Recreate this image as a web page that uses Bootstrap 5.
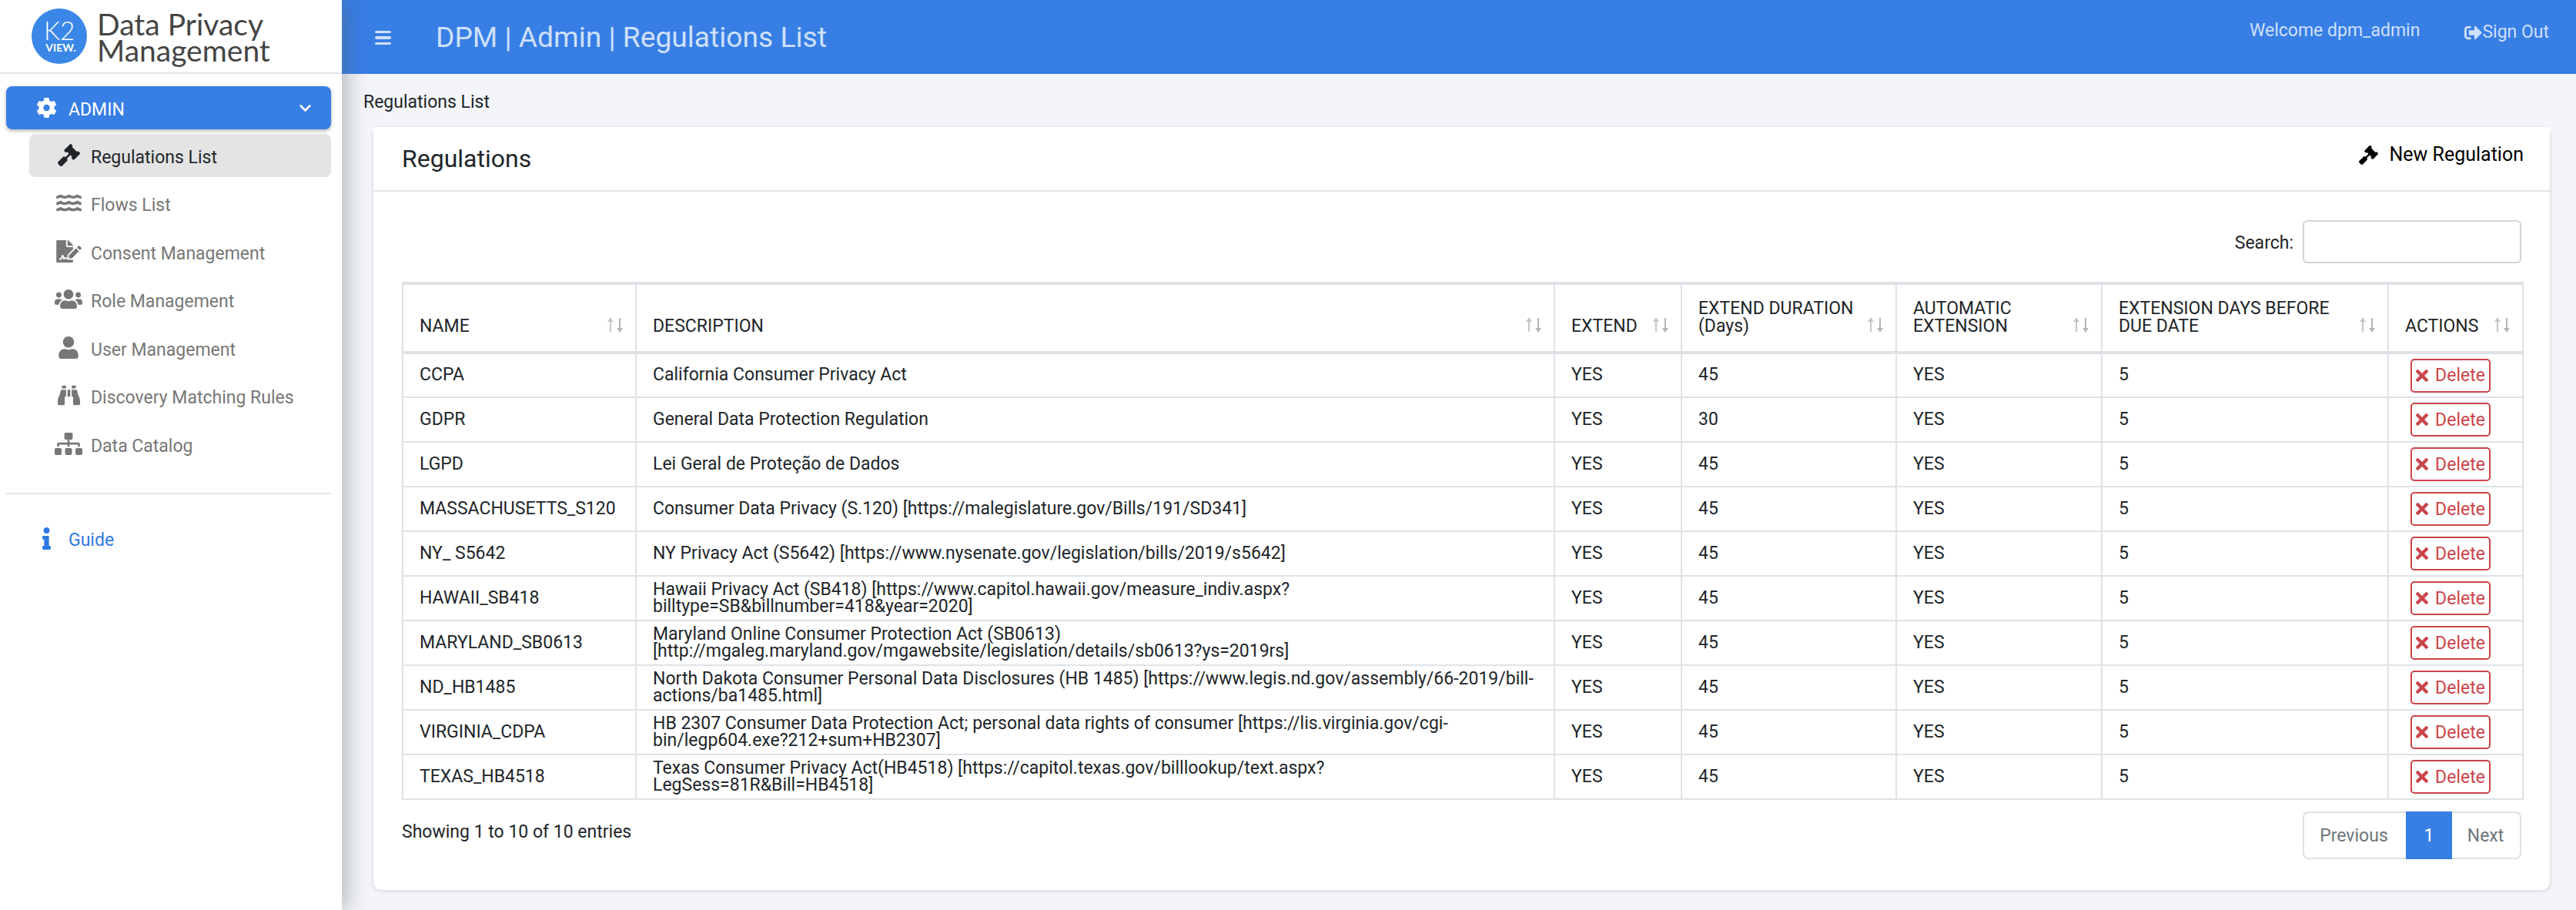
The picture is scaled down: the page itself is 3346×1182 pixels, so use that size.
<!DOCTYPE html>
<html lang="en"><head><meta charset="utf-8"><title>Regulations List</title>
<link href="https://cdn.jsdelivr.net/npm/bootstrap@5.3.0/dist/css/bootstrap.min.css" rel="stylesheet">
<style>
html,body{height:100%}
body{font-family:Roboto,"Liberation Sans",sans-serif;font-size:23px;line-height:22.4px;background:#f3f5f9;color:#212529;overflow:hidden}
.app-shell{height:1182px}
.side{width:444px;flex:none;background:#fff;box-shadow:6px 0 26px rgba(90,95,105,.42);z-index:2;height:100%}
.brand{height:96px;border-bottom:2px solid #e2e6ea;padding-left:41px;gap:13px}
.brand-text{font-family:Lato,"Liberation Sans",sans-serif;font-size:39px;line-height:34px;color:#454545;padding-top:1px}
.logo-mark{width:72px;height:72px;flex:none}
.logo-mark text{font-family:Lato,sans-serif;fill:#fff}
.menu-wrap{padding:16px 14px 0 8px}
.admin-btn{height:56px;background:#377ee5;color:#fff;border-radius:8px;padding:0 26px 0 39px;box-shadow:0 2px 5px rgba(0,0,0,.3);font-size:23px}
.admin-btn .lbl{margin-left:15px;padding-top:7px}
.sub-item{height:56px;margin-left:30px;margin-bottom:6.5px;border-radius:8px;color:#777;text-decoration:none;padding-top:6px}
.sub-item.on{background:#e4e4e4;color:#212529;margin-top:6px}
.ico-slot{width:80px;flex:none;display:flex;justify-content:center;padding-left:22px;margin-top:-8px}
.sub-item svg{fill:currentColor}
.on svg{fill:#212529}
.side-sep{border-top:2px solid #e4e4e4;margin:35px 0 0;opacity:1}
.guide{color:#2f79e4;text-decoration:none;margin:47px 0 0;height:26px;padding-left:47px}
.guide svg{fill:#2f79e4;margin-top:-6px}
.guide span{margin-left:23px}
.main-col{min-width:0}
.topbar{height:96px;background:#377ee5;color:#cfe0fb;padding:0 35px 0 43px}
.burger{width:21px;flex:none;display:flex;flex-direction:column;gap:4px;margin-top:2px}
.burger i{display:block;height:3.5px;background:#cfe0fb;border-radius:2px}
.page-title{font-size:37.2px;font-weight:400;margin:0 0 0 58px;line-height:44px}
.welcome{font-size:23px;margin-right:58px;margin-bottom:16px}
.signout{font-size:23px;margin-bottom:12px}
.signout svg{fill:#cfe0fb}
.crumb{padding:0 34px 0 28px;height:69px;padding-top:26px}
.panel{margin:0 34px 0 41px;border-radius:10px;border:0;height:991px;box-shadow:0 1px 5px rgba(60,70,90,.22)}
.panel-head{height:84px;border-bottom:2px solid #e4e6e9;padding:0 34px 0 37px;background:#fff}
.panel-title{font-size:32px;font-weight:400;margin:0;line-height:36px;color:#212529}
.new-reg{font-size:25px;color:#000;text-decoration:none;margin-top:-10px;gap:14px}
.panel-body{padding:37px 37px 0 37px}
.search-row{height:80px;align-items:flex-start}
.search-box{width:284px;height:56px;border:2px solid #ced4da;border-radius:6px;margin-left:12px;padding:0 12px}
.search-lbl{margin-top:19px}
.grid-table{table-layout:fixed;width:100%;border-collapse:collapse;margin:0}
.grid-table th,.grid-table td{border:2px solid #dee2e6;padding:0 21px;vertical-align:middle;font-weight:400}
.grid-table th{border-top-width:4px;border-bottom-width:4px;vertical-align:bottom;padding-bottom:21px;height:90px;color:#212529}
.grid-table td{height:58px}
.grid-table td:last-child{padding-left:28px;padding-right:0}
.th-in{display:flex;justify-content:space-between;align-items:flex-end}
.th-in svg{flex:none;margin:0 -6px 3px 6px}
.c1{width:303px}.c2{width:1193px}.c3{width:165px}.c4{width:279px}.c5{width:267px}.c6{width:372px}.c7{width:175px}
.del-btn{width:104px;height:44px;font-size:23px;border-width:2px;color:#cb444a;border-color:#cb444a;border-radius:5px;display:inline-flex;align-items:center;justify-content:center;gap:9px;line-height:1;padding:0}
.del-btn svg{fill:#cb444a}
.foot-row{margin-top:15px}
.foot-info{margin-top:15px;line-height:24px}
.pager .page-link{font-size:23px;padding:0;height:62px;line-height:60px;color:#6c757d;border:2px solid #dee2e6;text-align:center}
.pager .pg-prev .page-link{width:135px;border-right:0;border-radius:8px 0 0 8px;padding-right:4px}
.pager .active .page-link{width:60px;background:#377ee5;border-color:#377ee5;color:#fff}
.pager .pg-next .page-link{width:91px;border-left:0;border-radius:0 8px 8px 0}
.pager{margin:0}
</style></head><body>
<div class="app-shell d-flex">
<aside class="side d-flex flex-column">
 <div class="brand d-flex align-items-center">
  <svg class="logo-mark" viewBox="0 0 72 72" role="img" aria-label="K2 View"><circle cx="36" cy="36" r="36" fill="#3a87e8"/><text text-anchor="middle"><tspan x="36" y="41" font-size="33" font-weight="300">K2</tspan><tspan x="38" y="56" font-size="14" font-weight="700">VIEW.</tspan></text></svg>
  <div class="brand-text">Data Privacy<br>Management</div>
 </div>
 <div class="menu-wrap">
  <div class="admin-btn d-flex align-items-center">
   <svg width="27" height="28" viewBox="0 0 512 512" fill="#fff"><path d="M487.4 315.7l-42.6-24.6c4.3-23.2 4.3-47 0-70.2l42.6-24.6c4.9-2.8 7.1-8.6 5.5-14-11.1-35.6-30-67.8-54.7-94.6-3.8-4.1-10-5.1-14.8-2.3L380.8 110c-17.9-15.4-38.5-27.3-60.8-35.1V25.8c0-5.6-3.9-10.5-9.4-11.7-36.7-8.2-74.3-7.8-109.2 0-5.5 1.2-9.4 6.1-9.4 11.7V75c-22.2 7.9-42.8 19.8-60.8 35.1L88.7 85.5c-4.9-2.8-11-1.9-14.8 2.3-24.7 26.7-43.6 58.9-54.7 94.6-1.7 5.4.6 11.2 5.5 14L67.3 221c-4.3 23.2-4.3 47 0 70.2l-42.6 24.6c-4.9 2.8-7.1 8.6-5.5 14 11.1 35.6 30 67.8 54.7 94.6 3.8 4.1 10 5.1 14.8 2.3l42.6-24.6c17.9 15.4 38.5 27.3 60.8 35.1v49.2c0 5.6 3.9 10.5 9.4 11.7 36.7 8.2 74.3 7.8 109.2 0 5.5-1.2 9.4-6.1 9.4-11.7v-49.2c22.2-7.9 42.8-19.8 60.8-35.1l42.6 24.6c4.9 2.8 11 1.9 14.8-2.3 24.7-26.7 43.6-58.9 54.7-94.6 1.5-5.5-.7-11.3-5.6-14.1zM256 336c-44.1 0-80-35.9-80-80s35.9-80 80-80 80 35.9 80 80-35.9 80-80 80z"/></svg>
   <span class="lbl flex-grow-1">ADMIN</span>
   <svg width="15" height="17" viewBox="0 0 448 512" fill="#fff"><path d="M207.029 381.476L12.686 187.132c-9.373-9.373-9.373-24.569 0-33.941l22.667-22.667c9.357-9.357 24.522-9.375 33.901-.04L224 284.505l154.745-154.021c9.379-9.335 24.544-9.317 33.901.04l22.667 22.667c9.373 9.373 9.373 24.569 0 33.941L240.971 381.476c-9.373 9.372-24.569 9.372-33.942 0z"/></svg>
  </div>
  <a class="sub-item on d-flex align-items-center" href="#"><span class="ico-slot"><svg width="29" height="29" viewBox="0 0 512 512"><path d="M504.971 199.362l-22.627-22.627c-9.373-9.373-24.569-9.373-33.941 0l-5.657 5.657L329.608 69.255l5.657-5.657c9.373-9.373 9.373-24.569 0-33.941L312.638 7.029c-9.373-9.373-24.569-9.373-33.941 0L154.246 131.48c-9.373 9.373-9.373 24.569 0 33.941l22.627 22.627c9.373 9.373 24.569 9.373 33.941 0l5.657-5.657 39.598 39.598-81.04 81.04-5.657-5.657c-12.497-12.497-32.758-12.497-45.255 0L9.373 412.118c-12.497 12.497-12.497 32.758 0 45.255l45.255 45.255c12.497 12.497 32.758 12.497 45.255 0l114.745-114.745c12.497-12.497 12.497-32.758 0-45.255l-5.657-5.657 81.04-81.04 39.598 39.598-5.657 5.657c-9.373 9.373-9.373 24.569 0 33.941l22.627 22.627c9.373 9.373 24.569 9.373 33.941 0l124.451-124.451c9.372-9.372 9.372-24.568 0-33.941z"/></svg></span>Regulations List</a>
  <a class="sub-item d-flex align-items-center" href="#"><span class="ico-slot"><svg width="33" height="29" viewBox="0 0 576 512"><path d="M562.1 383.9c-21.5-2.4-42.1-10.5-57.9-22.9-14.1-11.1-34.2-11.3-48.2 0-37.9 30.4-107.2 30.4-145.7-1.5-13.5-11.2-33-9.1-46.7 1.8-38 30.1-106.9 30-145.2-1.7-13.5-11.2-33.3-8.9-47.1 2-15.5 12.2-36 20.1-57.7 22.4-7.9.8-13.6 7.8-13.6 15.7v32.2c0 9.1 7.6 16.8 16.7 16 28.8-2.5 56.1-11.4 79.4-25.9 56.5 34.6 137 34.1 192 0 56.5 34.6 137 34.1 192 0 23.3 14.2 50.9 23.3 79.1 25.8 9.1.8 16.7-6.9 16.7-16v-31.6c.1-8-5.7-15.4-13.8-16.3zm0-144c-21.5-2.4-42.1-10.5-57.9-22.9-14.1-11.1-34.2-11.3-48.2 0-37.9 30.4-107.2 30.4-145.7-1.5-13.5-11.2-33-9.1-46.7 1.8-38 30.1-106.9 30-145.2-1.7-13.5-11.2-33.3-8.9-47.1 2-15.5 12.2-36 20.1-57.7 22.4-7.9.8-13.6 7.8-13.6 15.7v32.2c0 9.1 7.6 16.8 16.7 16 28.8-2.5 56.1-11.4 79.4-25.9 56.5 34.6 137 34.1 192 0 56.5 34.6 137 34.1 192 0 23.3 14.2 50.9 23.3 79.1 25.8 9.1.8 16.7-6.9 16.7-16v-31.6c.1-8-5.7-15.4-13.8-16.3zm0-144C540.6 93.4 520 85.4 504.2 73 490.1 61.9 470 61.7 456 73c-37.9 30.4-107.2 30.4-145.7-1.5-13.5-11.2-33-9.1-46.7 1.8-38 30.1-106.9 30-145.2-1.7-13.5-11.2-33.3-8.9-47.1 2-15.5 12.2-36 20.1-57.7 22.4-7.9.8-13.6 7.8-13.6 15.7v32.2c0 9.1 7.6 16.8 16.7 16 28.8-2.5 56.1-11.4 79.4-25.9 56.5 34.6 137 34.1 192 0 56.5 34.6 137 34.1 192 0 23.3 14.2 50.9 23.3 79.1 25.8 9.1.8 16.7-6.9 16.7-16v-31.6c.1-8-5.7-15.4-13.8-16.3z"/></svg></span>Flows List</a>
  <a class="sub-item d-flex align-items-center" href="#"><span class="ico-slot"><svg width="33" height="29" viewBox="0 0 576 512"><path d="M218.17 424.14c-2.95-5.92-8.09-6.52-10.17-6.52s-7.22.59-10.02 6.19l-7.67 15.34c-6.37 12.78-25.03 11.37-29.48-2.09L144 386.59l-10.61 31.88c-5.89 17.66-22.38 29.53-41 29.53H80c-8.84 0-16-7.16-16-16s7.16-16 16-16h12.39c4.83 0 9.11-3.08 10.64-7.66l18.19-54.64c3.3-9.81 12.44-16.41 22.78-16.41s19.48 6.59 22.77 16.41l13.88 41.64c19.75-16.19 54.06-9.7 66 14.16 1.89 3.78 5.49 5.95 9.36 6.26v-82.12l128-127.09V160H248c-13.2 0-24-10.8-24-24V0H24C10.7 0 0 10.7 0 24v464c0 13.3 10.7 24 24 24h336c13.3 0 24-10.7 24-24v-40l-128-.11c-16.12-.31-30.58-9.28-37.83-23.75zM384 121.9c0-6.3-2.5-12.4-7-16.9L279.1 7c-4.5-4.5-10.6-7-17-7H256v128h128v-6.1zm-96 225.06V416h68.99l161.68-162.78-67.88-67.88L288 346.96zm280.54-179.63l-31.87-31.87c-9.94-9.94-26.07-9.94-36.01 0l-27.25 27.25 67.88 67.88 27.25-27.25c9.95-9.94 9.95-26.07 0-36.01z"/></svg></span>Consent Management</a>
  <a class="sub-item d-flex align-items-center" href="#"><span class="ico-slot"><svg width="36" height="29" viewBox="0 0 640 512"><path d="M96 224c35.3 0 64-28.7 64-64s-28.7-64-64-64-64 28.7-64 64 28.7 64 64 64zm448 0c35.3 0 64-28.7 64-64s-28.7-64-64-64-64 28.7-64 64 28.7 64 64 64zm32 32h-64c-17.6 0-33.5 7.1-45.1 18.6 40.3 22.1 68.9 62 75.1 109.4h66c17.7 0 32-14.3 32-32v-32c0-35.3-28.7-64-64-64zm-256 0c61.9 0 112-50.1 112-112S381.9 32 320 32 208 82.1 208 144s50.1 112 112 112zm76.8 32h-8.3c-20.8 10-43.9 16-68.5 16s-47.6-6-68.5-16h-8.3C179.6 288 128 339.6 128 403.2V432c0 26.5 21.5 48 48 48h288c26.5 0 48-21.5 48-48v-28.8c0-63.6-51.6-115.2-115.2-115.2zm-223.7-13.4C161.5 263.1 145.6 256 128 256H64c-35.3 0-64 28.7-64 64v32c0 17.7 14.3 32 32 32h65.9c6.3-47.4 34.9-87.3 75.2-109.4z"/></svg></span>Role Management</a>
  <a class="sub-item d-flex align-items-center" href="#"><span class="ico-slot"><svg width="26" height="29" viewBox="0 0 448 512"><path d="M224 256c70.7 0 128-57.3 128-128S294.7 0 224 0 96 57.3 96 128s57.3 128 128 128zm89.6 32h-16.7c-22.2 10.2-46.9 16-72.9 16s-50.6-5.8-72.9-16h-16.7C60.2 288 0 348.2 0 422.4V464c0 26.5 21.5 48 48 48h352c26.5 0 48-21.5 48-48v-41.6c0-74.2-60.2-134.4-134.4-134.4z"/></svg></span>User Management</a>
  <a class="sub-item d-flex align-items-center" href="#"><span class="ico-slot"><svg width="29" height="29" viewBox="0 0 512 512"><path d="M416 48c0-8.84-7.16-16-16-16h-64c-8.84 0-16 7.16-16 16v48h96V48zM63.91 159.99C61.4 253.84 3.46 274.22 0 404v44c0 17.67 14.33 32 32 32h96c17.67 0 32-14.33 32-32V288h32V128H95.84c-17.63 0-31.45 14.37-31.93 31.99zm384.18 0c-.48-17.62-14.3-31.99-31.93-31.99H320v160h32v160c0 17.67 14.33 32 32 32h96c17.67 0 32-14.33 32-32v-44c-3.46-129.78-61.4-150.16-63.91-244.01zM176 32h-64c-8.84 0-16 7.16-16 16v48h96V48c0-8.84-7.16-16-16-16zm48 256h64V128h-64v160z"/></svg></span>Discovery Matching Rules</a>
  <a class="sub-item d-flex align-items-center" href="#"><span class="ico-slot"><svg width="36" height="29" viewBox="0 0 640 512"><path d="M128 352H32c-17.67 0-32 14.33-32 32v96c0 17.67 14.33 32 32 32h96c17.67 0 32-14.33 32-32v-96c0-17.67-14.33-32-32-32zm-24-80h192v48h48v-48h192v48h48v-57.59c0-21.17-17.23-38.41-38.41-38.41H344v-64h40c17.67 0 32-14.33 32-32V32c0-17.67-14.33-32-32-32H256c-17.67 0-32 14.33-32 32v96c0 17.67 14.33 32 32 32h40v64H94.41C73.23 224 56 241.23 56 262.41V320h48v-48zm264 80h-96c-17.67 0-32 14.33-32 32v96c0 17.67 14.33 32 32 32h96c17.67 0 32-14.33 32-32v-96c0-17.67-14.33-32-32-32zm240 0h-96c-17.67 0-32 14.33-32 32v96c0 17.67 14.33 32 32 32h96c17.67 0 32-14.33 32-32v-96c0-17.67-14.33-32-32-32z"/></svg></span>Data Catalog</a>
  <hr class="side-sep">
  <a class="guide d-flex align-items-center" href="#"><svg width="11" height="29" viewBox="0 0 192 512"><path d="M20 424.229h20V279.771H20c-11.046 0-20-8.954-20-20V212c0-11.046 8.954-20 20-20h112c11.046 0 20 8.954 20 20v212.229h20c11.046 0 20 8.954 20 20V492c0 11.046-8.954 20-20 20H20c-11.046 0-20-8.954-20-20v-47.771c0-11.046 8.954-20 20-20zM96 0C56.235 0 24 32.235 24 72s32.235 72 72 72 72-32.235 72-72S135.764 0 96 0z"/></svg><span>Guide</span></a>
 </div>
</aside>
<div class="main-col flex-grow-1 d-flex flex-column">
 <header class="topbar d-flex align-items-center">
  <span class="burger"><i></i><i></i><i></i></span>
  <h1 class="page-title flex-grow-1">DPM | Admin | Regulations List</h1>
  <span class="welcome">Welcome dpm_admin</span>
  <span class="signout d-flex align-items-center"><svg width="23" height="23" viewBox="0 0 512 512"><path d="M497 273L329 441c-15 15-41 4.5-41-17v-96H152c-13.3 0-24-10.7-24-24v-96c0-13.3 10.7-24 24-24h136V88c0-21.4 25.9-32 41-17l168 168c9.3 9.4 9.3 24.6 0 34zM192 436v-40c0-6.6-5.4-12-12-12H96c-17.7 0-32-14.3-32-32V160c0-17.7 14.3-32 32-32h84c6.6 0 12-5.4 12-12V76c0-6.6-5.4-12-12-12H96c-53 0-96 43-96 96v192c0 53 43 96 96 96h84c6.6 0 12-5.4 12-12z"/></svg>Sign Out</span>
 </header>
 <div class="crumb">Regulations List</div>
 <section class="card panel">
  <div class="panel-head d-flex justify-content-between align-items-center">
   <h2 class="panel-title">Regulations</h2>
   <a class="new-reg d-flex align-items-center" href="#"><svg width="25" height="25" viewBox="0 0 512 512"><path d="M504.971 199.362l-22.627-22.627c-9.373-9.373-24.569-9.373-33.941 0l-5.657 5.657L329.608 69.255l5.657-5.657c9.373-9.373 9.373-24.569 0-33.941L312.638 7.029c-9.373-9.373-24.569-9.373-33.941 0L154.246 131.48c-9.373 9.373-9.373 24.569 0 33.941l22.627 22.627c9.373 9.373 24.569 9.373 33.941 0l5.657-5.657 39.598 39.598-81.04 81.04-5.657-5.657c-12.497-12.497-32.758-12.497-45.255 0L9.373 412.118c-12.497 12.497-12.497 32.758 0 45.255l45.255 45.255c12.497 12.497 32.758 12.497 45.255 0l114.745-114.745c12.497-12.497 12.497-32.758 0-45.255l-5.657-5.657 81.04-81.04 39.598 39.598-5.657 5.657c-9.373 9.373-9.373 24.569 0 33.941l22.627 22.627c9.373 9.373 24.569 9.373 33.941 0l124.451-124.451c9.372-9.372 9.372-24.568 0-33.941z"/></svg>New Regulation</a>
  </div>
  <div class="panel-body">
   <div class="search-row d-flex justify-content-end"><label class="search-lbl" for="q">Search:</label><input id="q" class="search-box" type="text"></div>
   <table class="grid-table">
    <colgroup><col class="c1"><col class="c2"><col class="c3"><col class="c4"><col class="c5"><col class="c6"><col class="c7"></colgroup>
    <thead id="hd"></thead><tbody id="bd"></tbody>
   </table>
   <div class="foot-row d-flex justify-content-between align-items-start">
    <div class="foot-info">Showing 1 to 10 of 10 entries</div>
    <ul class="pagination pager">
     <li class="page-item pg-prev"><a class="page-link" href="#">Previous</a></li>
     <li class="page-item active"><a class="page-link" href="#">1</a></li>
     <li class="page-item pg-next"><a class="page-link" href="#">Next</a></li>
    </ul>
   </div>
  </div>
 </section>
</div>
</div>
<script>
const sort='<svg width="22" height="20" viewBox="0 0 22 20"><path d="M5 0l4 6H6v13H4V6H1z" fill="#c4c6c8"/><path d="M17 20l-4-6h3V1h2v13h3z" fill="#b4b6b8"/></svg>';
document.getElementById('hd').innerHTML='<tr>'+['NAME','DESCRIPTION','EXTEND','EXTEND DURATION (Days)','AUTOMATIC EXTENSION','EXTENSION DAYS BEFORE DUE DATE','ACTIONS'].map(h=>`<th><div class="th-in"><span>${h}</span>${sort}</div></th>`).join('')+'</tr>';
const rows=[['CCPA','California Consumer Privacy Act',45],['GDPR','General Data Protection Regulation',30],['LGPD','Lei Geral de Proteção de Dados',45],['MASSACHUSETTS_S120','Consumer Data Privacy (S.120) [https://malegislature.gov/Bills/191/SD341]',45],['NY_ S5642','NY Privacy Act (S5642) [https://www.nysenate.gov/legislation/bills/2019/s5642]',45],['HAWAII_SB418','Hawaii Privacy Act (SB418) [https://www.capitol.hawaii.gov/measure_indiv.aspx?billtype=SB&amp;billnumber=418&amp;year=2020]',45],['MARYLAND_SB0613','Maryland Online Consumer Protection Act (SB0613) [http://mgaleg.maryland.gov/mgawebsite/legislation/details/sb0613?ys=2019rs]',45],['ND_HB1485','North Dakota Consumer Personal Data Disclosures (HB 1485) [https://www.legis.nd.gov/assembly/66-2019/bill-actions/ba1485.html]',45],['VIRGINIA_CDPA','HB 2307 Consumer Data Protection Act; personal data rights of consumer [https://lis.virginia.gov/cgi-bin/legp604.exe?212+sum+HB2307]',45],['TEXAS_HB4518','Texas Consumer Privacy Act(HB4518) [https://capitol.texas.gov/billlookup/text.aspx?LegSess=81R&amp;Bill=HB4518]',45]];
const del='<button class="btn del-btn" type="button"><svg width="16" height="24" viewBox="0 0 352 512"><path d="M242.72 256l100.07-100.07c12.28-12.28 12.28-32.19 0-44.48l-22.24-22.24c-12.28-12.28-32.19-12.28-44.48 0L176 189.28 75.93 89.21c-12.28-12.28-32.19-12.28-44.48 0L9.21 111.45c-12.28 12.28-12.28 32.19 0 44.48L109.28 256 9.21 356.07c-12.28 12.28-12.28 32.19 0 44.48l22.24 22.24c12.28 12.28 32.2 12.28 44.48 0L176 322.72l100.07 100.07c12.28 12.28 32.2 12.28 44.48 0l22.24-22.24c12.28-12.28 12.28-32.19 0-44.48L242.72 256z"/></svg>Delete</button>';
document.getElementById('bd').innerHTML=rows.map(r=>`<tr><td>${r[0]}</td><td>${r[1]}</td><td>YES</td><td>${r[2]}</td><td>YES</td><td>5</td><td>${del}</td></tr>`).join('');
</script>
<script src="https://cdn.jsdelivr.net/npm/bootstrap@5.3.0/dist/js/bootstrap.bundle.min.js"></script>
</body></html>
